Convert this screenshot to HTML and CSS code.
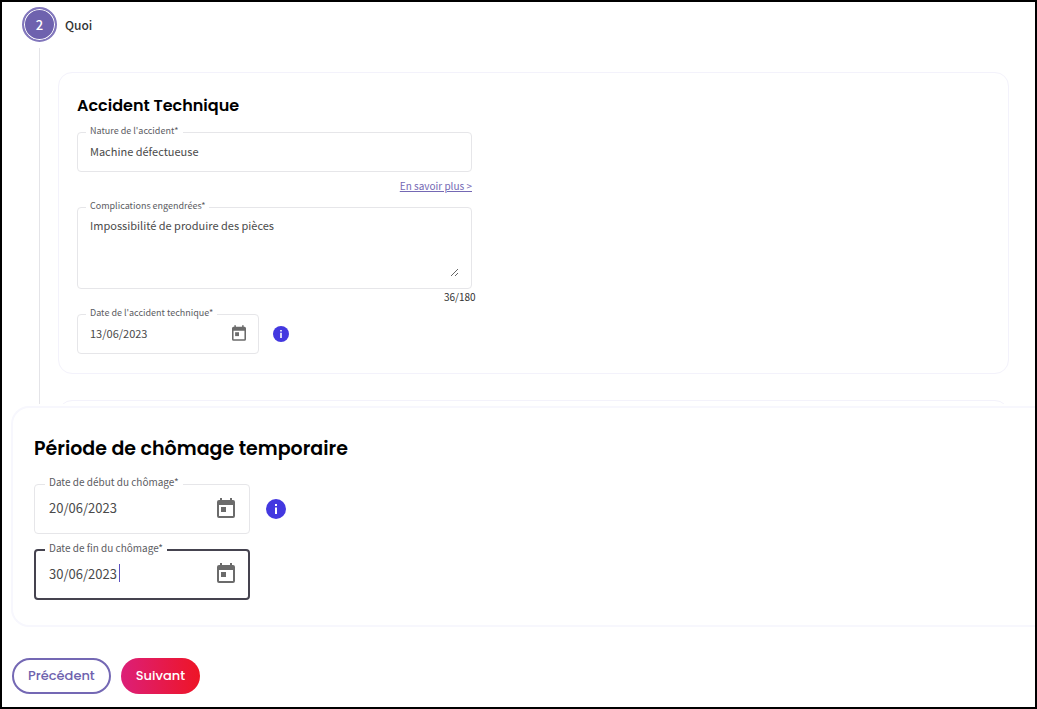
FILE: index.html
```
<!DOCTYPE html>
<html lang="fr">
<head>
    <meta charset="UTF-8">
    <meta name="viewport" content="width=device-width, initial-scale=1.0">
    <title>Chômage temporaire</title>
    <link rel="stylesheet" href="styles.css">
</head>
<body>
    <svg class="sprite" aria-hidden="true">
        <symbol id="icon-calendar" viewBox="3 1 18 20">
            <path d="M19 3h-1V1h-2v2H8V1H6v2H5a2 2 0 0 0-2 2v14a2 2 0 0 0 2 2h14a2 2 0 0 0 2-2V5a2 2 0 0 0-2-2zm0 16H5V8h14v11z"/>
            <path d="M7 10h5v5H7z"/>
        </symbol>
        <symbol id="icon-info" viewBox="0 0 20 20">
            <circle cx="10" cy="10" r="10" fill="#4338e0"/>
            <path d="M9 5h2v2H9zM9 8.500h2V15H9z" fill="#fff"/>
        </symbol>
    </svg>

    <div class="step">
        <span class="step-number">2</span>
        <span class="step-label">Quoi</span>
    </div>

    <div class="step-content">
        <section class="card">
            <h2>Accident Technique</h2>
            <fieldset class="field">
                <legend><label for="nature">Nature de l'accident*</label></legend>
                <input type="text" id="nature" value="Machine défectueuse">
            </fieldset>
            <a href="#" class="more">En savoir plus &gt;</a>
            <fieldset class="field field-area">
                <legend><label for="complications">Complications engendrées*</label></legend>
                <textarea id="complications" maxlength="180">Impossibilité de produire des pièces</textarea>
            </fieldset>
            <div class="counter">36/180</div>
            <div class="row">
                <fieldset class="field field-date">
                    <legend><label for="dateAccident">Date de l'accident technique*</label></legend>
                    <input type="text" id="dateAccident" value="13/06/2023">
                    <button type="button" class="picker" aria-label="Calendrier"><svg><use href="#icon-calendar"/></svg></button>
                </fieldset>
                <button type="button" class="info" aria-label="Information"><svg><use href="#icon-info"/></svg></button>
            </div>
        </section>
        <div class="next">
            <section class="card"></section>
        </div>
    </div>

    <section class="panel">
        <h1>Période de chômage temporaire</h1>
        <div class="row">
            <fieldset class="field field-date">
                <legend><label for="dateDebut">Date de début du chômage*</label></legend>
                <input type="text" id="dateDebut" value="20/06/2023">
                <button type="button" class="picker" aria-label="Calendrier"><svg><use href="#icon-calendar"/></svg></button>
            </fieldset>
            <button type="button" class="info" aria-label="Information"><svg><use href="#icon-info"/></svg></button>
        </div>
        <div class="row">
            <fieldset class="field field-date active">
                <legend><label for="dateFin">Date de fin du chômage*</label></legend>
                <input type="text" id="dateFin" value="30/06/2023">
                <span class="caret"></span>
                <button type="button" class="picker" aria-label="Calendrier"><svg><use href="#icon-calendar"/></svg></button>
            </fieldset>
        </div>
    </section>

    <div class="actions">
        <button type="button" class="btn btn-outline">Précédent</button>
        <button type="button" class="btn btn-primary">Suivant</button>
    </div>
</body>
</html>
```
FILE: styles.css
```
* {
    box-sizing: border-box;
}

body {
    margin: 0;
    min-height: 100vh;
    border: 2px solid #000;
    background-color: #fff;
    color: #4a4a4a;
    font-family: "Source Sans Pro", "Noto Sans CJK SC", sans-serif;
    font-size: 11px;
}

h1, h2 {
    margin: 0;
    color: #000;
    font-family: Poppins, Inter, sans-serif;
    font-weight: 600;
}

h1 {
    font-size: 19px;
    line-height: 32px;
}

h2 {
    font-size: 16px;
    line-height: 24px;
}

input, textarea, button {
    padding: 0;
    border: none;
    background: none;
    color: inherit;
    font: inherit;
    outline: none;
}

button {
    cursor: pointer;
}

svg {
    display: block;
    width: 100%;
    height: 100%;
}

.sprite {
    display: none;
}

/* step header */
.step {
    display: flex;
    align-items: center;
    gap: 8px;
    padding: 5px 0 0 20px;
}

.step-number {
    width: 35px;
    height: 35px;
    border: 2px solid #8277bc;
    border-radius: 50%;
    box-shadow: inset 0 0 0 1px #fff;
    background-color: #6e62ae;
    color: #fff;
    font-size: 13px;
    font-weight: 500;
    line-height: 31px;
    text-align: center;
}

.step-label {
    color: #333;
    font-size: 12px;
    font-weight: 500;
    line-height: 18px;
}

.step-content {
    margin: 6px 26px 0 37px;
    padding: 24px 0 0 18px;
    border-left: 1px solid #e4e4e8;
}

.card {
    padding: 21px 18px 19px;
    border: 1px solid #f3f2fb;
    border-radius: 14px;
}

.card .field, .more, .counter {
    max-width: 395px;
}

.next {
    height: 30px;
    padding-top: 26px;
    overflow: hidden;
}

/* outlined fields, the label sits in the border */
.field {
    display: flex;
    align-items: center;
    min-width: 0;
    height: 47px;
    margin: 0;
    padding: 0 12px 8px;
    border: 1px solid #e6e6e9;
    border-radius: 4px;
}

.field legend {
    height: 14px;
    margin-left: -4px;
    padding: 0 4px;
    color: #5c5c62;
    font-size: 9px;
    line-height: 12px;
}

.field input {
    flex: 1;
    min-width: 0;
    height: 24px;
}

h2 + .field {
    margin-top: 7px;
}

.more {
    display: block;
    margin: 6px 0;
    color: #7468b4;
    font-size: 10px;
    line-height: 16px;
    text-align: right;
}

.card .field-area {
    height: 89px;
}

.field-area textarea {
    width: 100%;
    height: 60px;
    line-height: 16px;
    resize: both;
}

.counter {
    padding-left: 367px;
    color: #333;
    font-size: 10px;
    line-height: 16px;
    white-space: nowrap;
}

.row {
    display: flex;
    align-items: center;
    gap: 14px;
    margin-top: 2px;
}

.card .field-date {
    width: 182px;
}

.picker {
    flex: none;
    width: 14px;
    height: 16px;
    color: #6b6b6b;
    fill: currentColor;
}

.info {
    flex: none;
    width: 16px;
    height: 16px;
    margin-top: 7px;
}

/* period */
.panel {
    margin: 2px 0 0 9px;
    padding: 25px 21px 25px;
    border: 2px solid #f7f7fd;
    border-right: none;
    border-radius: 18px 0 0 18px;
}

.panel .field {
    width: 216px;
    height: 58px;
    padding: 0 14px 10px;
}

.panel .field legend {
    height: 16px;
    font-size: 10px;
    line-height: 12px;
}

.panel .row {
    gap: 16px;
    margin-top: 8px;
}

.panel h1 + .row {
    margin-top: 11px;
}

.panel .field input {
    font-size: 13px;
}

.panel .picker {
    width: 18px;
    height: 20px;
}

.panel .info {
    width: 20px;
    height: 20px;
}

.panel .active {
    padding: 0 13px 10px;
    border: 2px solid #45434f;
}

.panel .active input {
    flex: none;
    width: 70px;
}

.caret {
    width: 1px;
    height: 18px;
    margin-right: auto;
    background-color: #5b50c0;
}

/* buttons */
.actions {
    display: flex;
    gap: 10px;
    padding: 31px 10px 13px;
}

.btn {
    height: 36px;
    padding: 0 14px;
    border-radius: 18px;
    font-family: Poppins, Inter, sans-serif;
    font-size: 13px;
    font-weight: 500;
}

.btn-outline {
    border: 2px solid #7468b4;
    color: #6e62ae;
}

.btn-primary {
    padding: 0 15px;
    background-image: linear-gradient(to right, #dc1f78, #ee1526);
    color: #fff;
}
```
